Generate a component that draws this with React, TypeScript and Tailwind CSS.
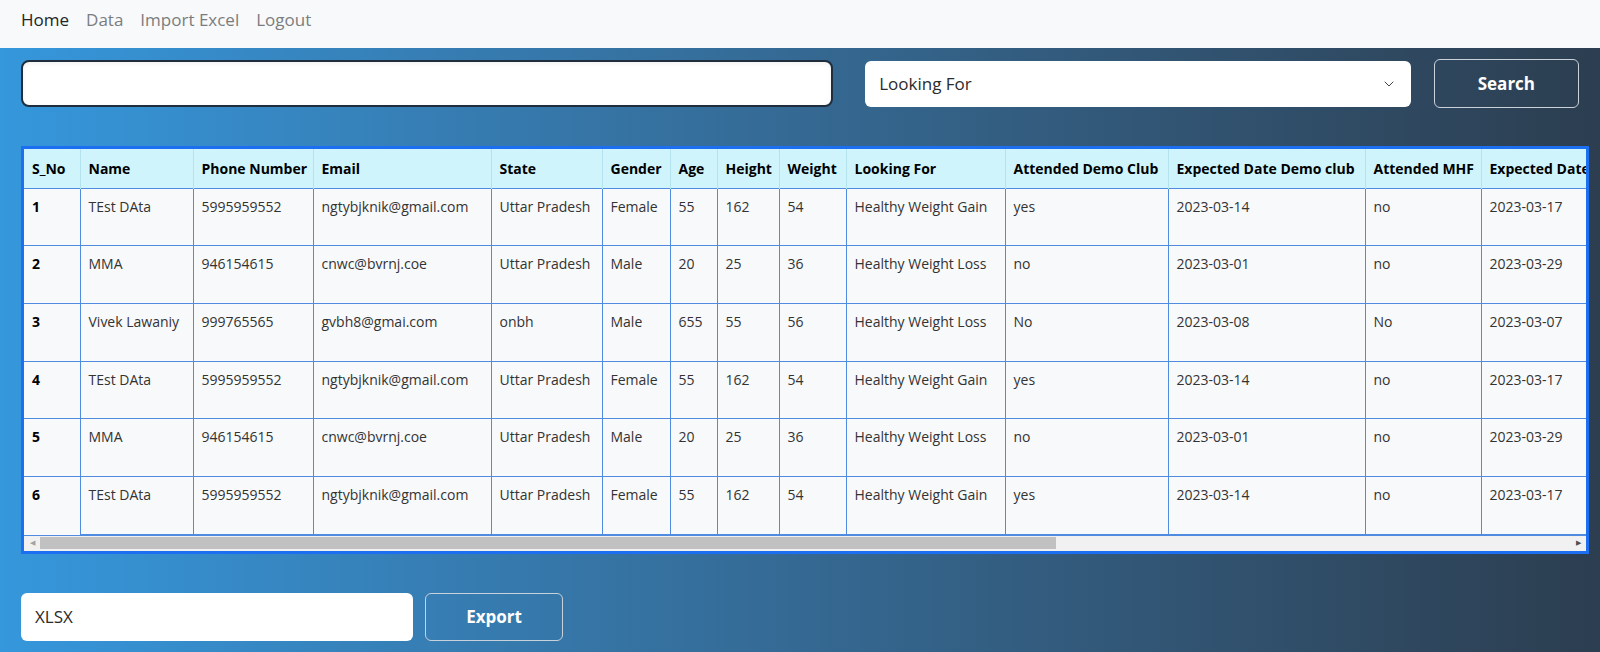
import { ChevronDown } from "lucide-react";

interface Row {
  sno: number;
  name: string;
  phone: string;
  email: string;
  state: string;
  gender: string;
  age: string;
  height: string;
  weight: string;
  lookingFor: string;
  demoClub: string;
  demoDate: string;
  mhf: string;
  mhfDate: string;
}

const rows: Row[] = [
  { sno: 1, name: "TEst DAta", phone: "5995959552", email: "ngtybjknik@gmail.com", state: "Uttar Pradesh", gender: "Female", age: "55", height: "162", weight: "54", lookingFor: "Healthy Weight Gain", demoClub: "yes", demoDate: "2023-03-14", mhf: "no", mhfDate: "2023-03-17" },
  { sno: 2, name: "MMA", phone: "946154615", email: "cnwc@bvrnj.coe", state: "Uttar Pradesh", gender: "Male", age: "20", height: "25", weight: "36", lookingFor: "Healthy Weight Loss", demoClub: "no", demoDate: "2023-03-01", mhf: "no", mhfDate: "2023-03-29" },
  { sno: 3, name: "Vivek Lawaniy", phone: "999765565", email: "gvbh8@gmai.com", state: "onbh", gender: "Male", age: "655", height: "55", weight: "56", lookingFor: "Healthy Weight Loss", demoClub: "No", demoDate: "2023-03-08", mhf: "No", mhfDate: "2023-03-07" },
  { sno: 4, name: "TEst DAta", phone: "5995959552", email: "ngtybjknik@gmail.com", state: "Uttar Pradesh", gender: "Female", age: "55", height: "162", weight: "54", lookingFor: "Healthy Weight Gain", demoClub: "yes", demoDate: "2023-03-14", mhf: "no", mhfDate: "2023-03-17" },
  { sno: 5, name: "MMA", phone: "946154615", email: "cnwc@bvrnj.coe", state: "Uttar Pradesh", gender: "Male", age: "20", height: "25", weight: "36", lookingFor: "Healthy Weight Loss", demoClub: "no", demoDate: "2023-03-01", mhf: "no", mhfDate: "2023-03-29" },
  { sno: 6, name: "TEst DAta", phone: "5995959552", email: "ngtybjknik@gmail.com", state: "Uttar Pradesh", gender: "Female", age: "55", height: "162", weight: "54", lookingFor: "Healthy Weight Gain", demoClub: "yes", demoDate: "2023-03-14", mhf: "no", mhfDate: "2023-03-17" },
];

const columns = [
  { label: "S_No", w: 56 },
  { label: "Name", w: 113 },
  { label: "Phone Number", w: 120 },
  { label: "Email", w: 178 },
  { label: "State", w: 111 },
  { label: "Gender", w: 68 },
  { label: "Age", w: 47 },
  { label: "Height", w: 62 },
  { label: "Weight", w: 67 },
  { label: "Looking For", w: 159 },
  { label: "Attended Demo Club", w: 163 },
  { label: "Expected Date Demo club", w: 197 },
  { label: "Attended MHF", w: 116 },
  { label: "Expected Date MHF", w: 160 },
];

const font = { fontFamily: '"Open Sans", "Liberation Sans", sans-serif' };

export default function App() {
  const tableWidth = columns.reduce((acc, c) => acc + c.w, 0);

  return (
    <div className="h-[652px] w-full overflow-hidden" style={font}>
      <nav className="h-12 bg-[#f8f9fa] flex items-center gap-[17px] px-[21px] pb-[8px] text-[17px]">
        <a className="text-[#212529]">Home</a>
        <a className="text-[#7a7d80]">Data</a>
        <a className="text-[#7a7d80]">Import Excel</a>
        <a className="text-[#7a7d80]">Logout</a>
      </nav>

      <main className="h-[604px] bg-gradient-to-r from-[#3597dc] to-[#2c3e50] px-[21px] pt-[11px]">
        <div className="flex items-center">
          <input className="w-[816px] h-[47px] bg-white rounded-lg border-2 border-[#1f2d3d] shadow-inner outline-none px-3" />
          <div className="ml-[32px] w-[548px] h-[46px] bg-white rounded-md flex items-center justify-between pl-[14px] pr-[14px] text-[17px] text-[#2b2b2b]">
            <span>Looking For</span>
            <ChevronDown size={16} strokeWidth={1.5} className="text-[#444]" />
          </div>
          <button className="ml-[23px] w-[146px] h-[49px] rounded-md border border-[#c9d1da] text-white font-bold text-[17px]">
            Search
          </button>
        </div>

        <div className="mt-[38px] w-[1568px] border-[3px] border-[#1d6ff2] bg-[#f8f9fb] overflow-hidden">
          <table className="table-fixed border-collapse text-[14px]" style={{ width: tableWidth }}>
            <colgroup>
              {columns.map(c => (
                <col key={c.label} style={{ width: c.w }} />
              ))}
            </colgroup>
            <thead>
              <tr className="h-[39px] bg-[#cff4fc]">
                {columns.map((c, i) => (
                  <th
                    key={c.label}
                    className={`text-left font-bold text-black whitespace-nowrap overflow-hidden px-2 border-[#b5e2ef] ${i === 0 ? "border-r" : "border-x"}`}
                  >
                    {c.label}
                  </th>
                ))}
              </tr>
            </thead>
            <tbody>
              {rows.map(r => (
                <tr key={r.sno} className="h-[57.7px] align-top text-[#333]">
                  <td className="px-2 pt-[7px] font-bold text-black border-t border-r border-[#4f8be0]">{r.sno}</td>
                  <td className="px-2 pt-[7px] whitespace-nowrap border border-[#4f8be0]">{r.name}</td>
                  <td className="px-2 pt-[7px] whitespace-nowrap border border-[#4f8be0]">{r.phone}</td>
                  <td className="px-2 pt-[7px] whitespace-nowrap border border-[#4f8be0]">{r.email}</td>
                  <td className="px-2 pt-[7px] whitespace-nowrap border border-[#4f8be0]">{r.state}</td>
                  <td className="px-2 pt-[7px] whitespace-nowrap border border-[#4f8be0]">{r.gender}</td>
                  <td className="px-2 pt-[7px] whitespace-nowrap border border-[#4f8be0]">{r.age}</td>
                  <td className="px-2 pt-[7px] whitespace-nowrap border border-[#4f8be0]">{r.height}</td>
                  <td className="px-2 pt-[7px] whitespace-nowrap border border-[#4f8be0]">{r.weight}</td>
                  <td className="px-2 pt-[7px] whitespace-nowrap border border-[#4f8be0]">{r.lookingFor}</td>
                  <td className="px-2 pt-[7px] whitespace-nowrap border border-[#4f8be0]">{r.demoClub}</td>
                  <td className="px-2 pt-[7px] whitespace-nowrap border border-[#4f8be0]">{r.demoDate}</td>
                  <td className="px-2 pt-[7px] whitespace-nowrap border border-[#4f8be0]">{r.mhf}</td>
                  <td className="px-2 pt-[7px] whitespace-nowrap border border-[#4f8be0]">{r.mhfDate}</td>
                </tr>
              ))}
            </tbody>
          </table>
          {/* horizontal scrollbar */}
          <div className="h-[16px] bg-[#f1f1f1] flex items-center border-t border-[#4f8be0]">
            <span className="w-[16px] flex justify-center text-[7px] text-[#a3a3a3]">◀</span>
            <div className="w-[1016px] h-[12px] bg-[#c1c1c1]" />
            <div className="flex-1" />
            <span className="w-[16px] flex justify-center text-[7px] text-[#505050]">▶</span>
          </div>
        </div>

        <div className="mt-[39px] flex items-center">
          <div className="w-[392px] h-[48px] bg-white rounded-md flex items-center px-[14px] text-[17px] text-[#2b2b2b]">
            XLSX
          </div>
          <button className="ml-[12px] w-[138px] h-[48px] rounded-md border border-[#c9d1da] text-white font-bold text-[17px]">
            Export
          </button>
        </div>
      </main>
    </div>
  );
}
